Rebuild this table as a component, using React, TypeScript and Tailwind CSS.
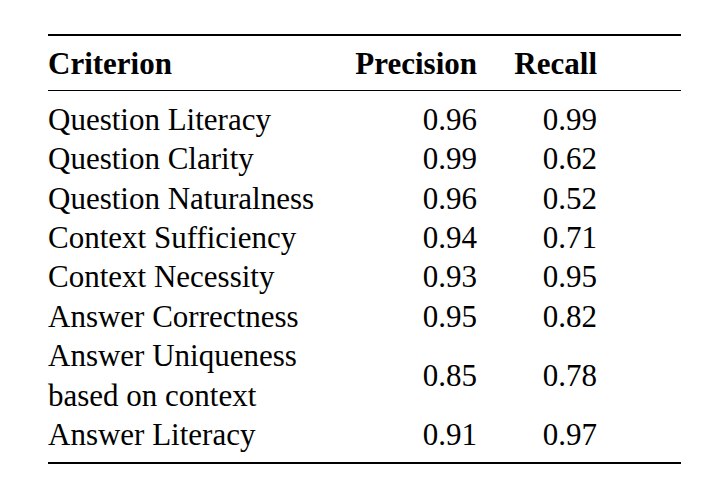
import React from "react";

const rows: { label: string[]; p: string; r: string }[] = [
  { label: ["Question Literacy"], p: "0.96", r: "0.99" },
  { label: ["Question Clarity"], p: "0.99", r: "0.62" },
  { label: ["Question Naturalness"], p: "0.96", r: "0.52" },
  { label: ["Context Sufficiency"], p: "0.94", r: "0.71" },
  { label: ["Context Necessity"], p: "0.93", r: "0.95" },
  { label: ["Answer Correctness"], p: "0.95", r: "0.82" },
  { label: ["Answer Uniqueness", "based on context"], p: "0.85", r: "0.78" },
  { label: ["Answer Literacy"], p: "0.91", r: "0.97" },
];

export default function App() {
  return (
    <div
      className="w-[702px] h-[486px] bg-white text-black pt-[34px] pl-[48px]"
      style={{ fontFamily: '"Liberation Serif", "Times New Roman", serif' }}
    >
      <div className="w-[633px] border-t-2 border-b-2 border-black text-[31px] leading-[39.4px]">
        <div className="flex pt-[8px] pb-[7px] border-b border-black font-bold">
          <div className="w-[300px]">Criterion</div>
          <div className="w-[129px] text-right">Precision</div>
          <div className="w-[120px] text-right">Recall</div>
        </div>
        <div className="pt-[8.4px] pb-[7.4px]">
          {rows.map((row) => (
            <div key={row.label.join(" ")} className="flex items-center">
              <div className="w-[300px] flex flex-col">
                {row.label.map((l) => (
                  <span key={l} className="whitespace-nowrap">{l}</span>
                ))}
              </div>
              <div className="w-[129px] text-right">{row.p}</div>
              <div className="w-[120px] text-right">{row.r}</div>
            </div>
          ))}
        </div>
      </div>
    </div>
  );
}
